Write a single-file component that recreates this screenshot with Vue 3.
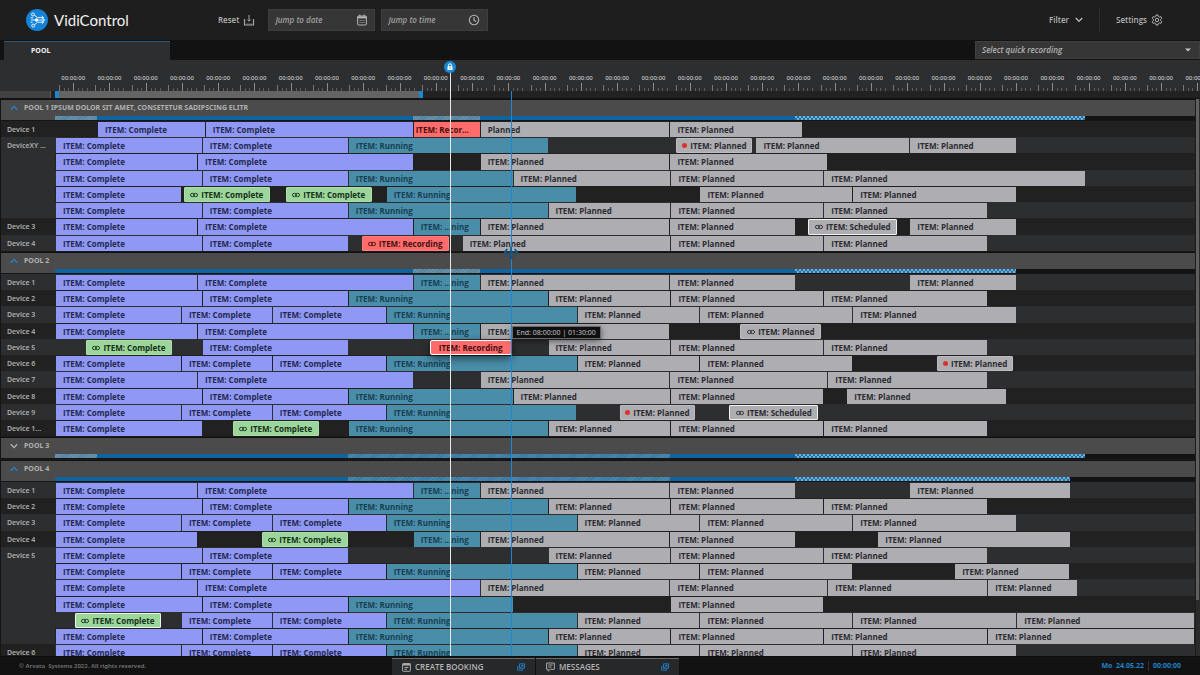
<script setup>
const ORIGIN = 55
const SPAN = 1141
const HOURS = 32

const at = (x) => ((x - ORIGIN) / SPAN) * 100 + '%'
const len = (a, b) => ((b - a) / SPAN) * 100 + '%'
const place = (a, b) => ({ left: at(a), width: len(a, b) })
const hourWidth = { flexBasis: (36.3 / SPAN) * 100 + '%' }

const names = {
  complete: 'ITEM: Complete',
  running: 'ITEM: Running',
  short: 'ITEM: ...ning',
  planned: 'ITEM: Planned',
  rest: 'Planned',
  cut: 'ITEM: Recor...',
  done: 'ITEM: Complete',
  doneMarked: 'ITEM: Complete',
  recording: 'ITEM: Recording',
  dragged: 'ITEM: Recording',
  armed: 'ITEM: Planned',
  linked: 'ITEM: Planned',
  scheduled: 'ITEM: Scheduled'
}
const withLink = ['done', 'doneMarked', 'recording', 'linked', 'scheduled']

const item = (kind, from, to) => ({ kind, from, to })
const chain = (kind, ...stops) => stops.slice(1).map((to, i) => item(kind, stops[i], to))
const C = (...s) => chain('complete', ...s)
const R = (...s) => chain('running', ...s)
const P = (...s) => chain('planned', ...s)

const rowA = (end) => [...C(55, 197, 413), item('short', 413, 480), ...P(480, 670, 796), ...P(910, end)]
const rowB = () => [...C(55, 202, 348), ...R(348, 548), ...P(548, 671, 824, 988)]
const rowC = (...tail) => [...C(55, 181, 272, 386), ...R(386, 577), ...P(577, 700, 853, ...tail)]

const pools = [
  {
    name: 'POOL 1 IPSUM DOLOR SIT AMET, CONSETETUR SADIPSCING ELITR',
    open: true,
    start: 0,
    load: [['hatch', 55, 97], ['full', 97, 413], ['hatch', 413, 480], ['full', 480, 796], ['dots', 796, 1086]],
    devices: [
      { name: 'Device 1', rows: [[...C(97, 205, 413), item('cut', 413, 480), item('rest', 480, 670), ...P(670, 803)]] },
      {
        name: 'DeviceXY long',
        text: 'DeviceXY ...',
        rows: [
          [...C(55, 202, 348), ...R(348, 548), item('armed', 676, 753), ...P(756, 910, 1017)],
          [...C(55, 197, 413), ...P(480, 670, 828)],
          [...C(55, 202, 348), ...R(348, 513), ...P(513, 671, 824, 1086)],
          [...C(55, 181), item('done', 183, 270), item('done', 285, 372), ...R(386, 576), ...P(700, 853, 1017)],
          rowB()
        ]
      },
      { name: 'Device 3', rows: [[...C(55, 197, 413), item('short', 413, 480), ...P(480, 670, 796), item('scheduled', 808, 898), ...P(910, 1017)]] },
      { name: 'Device 4', rows: [[...C(55, 202, 348), item('recording', 361, 449), ...P(462, 671, 824, 988)]] }
    ]
  },
  {
    name: 'POOL 2',
    open: true,
    start: 1,
    load: [['full', 55, 413], ['hatch', 413, 480], ['full', 480, 796], ['dots', 796, 1017]],
    devices: [
      { name: 'Device 1', rows: [rowA(1017)] },
      { name: 'Device 2', rows: [rowB()] },
      { name: 'Device 3', rows: [rowC(1017)] },
      { name: 'Device 4', rows: [[...C(55, 197, 413), item('short', 413, 480), ...P(480, 670), item('linked', 740, 822)]] },
      { name: 'Device 5', rows: [[item('done', 85, 172), ...C(202, 348), item('dragged', 429, 512), ...P(548, 671, 824, 988)]] },
      { name: 'Device 6', rows: [[...rowC(), item('armed', 937, 1014)]] },
      { name: 'Device 7', rows: [[...C(55, 197, 413), ...P(480, 670, 828, 988)]] },
      { name: 'Device 8', rows: [[...C(55, 202, 348), ...R(348, 513), ...P(513, 671, 824), ...P(847, 1007)]] },
      { name: 'Device 9', rows: [[...C(55, 181, 272, 386), ...R(386, 576), item('armed', 619, 696), item('scheduled', 729, 819)]] },
      { name: 'Device 10', text: 'Device 1...', rows: [[...C(55, 202), item('done', 232, 319), ...R(348, 548), ...P(548, 671, 824, 988)]] }
    ]
  },
  {
    name: 'POOL 3',
    open: false,
    start: 1,
    load: [['hatch', 55, 97], ['full', 97, 348], ['soft', 348, 671], ['full', 671, 796], ['dots', 796, 1086]],
    devices: []
  },
  {
    name: 'POOL 4',
    open: true,
    start: 1,
    load: [['full', 55, 348], ['soft', 348, 671], ['full', 671, 796], ['dots', 796, 1071]],
    devices: [
      { name: 'Device 1', rows: [rowA(1071)] },
      { name: 'Device 2', rows: [rowB()] },
      { name: 'Device 3', rows: [rowC(1017)] },
      { name: 'Device 4', rows: [[...C(55, 197), item('done', 261, 348), item('short', 413, 480), ...P(480, 670, 796), ...P(878, 1071)]] },
      {
        name: 'Device 5',
        rows: [
          [...C(55, 202, 348), ...P(548, 671, 824, 988)],
          [...rowC(), ...P(955, 1070)],
          [...C(55, 197, 480), ...P(480, 670, 828, 988, 1078)],
          [...C(55, 202, 348), ...R(348, 513), ...P(671, 824)],
          [item('doneMarked', 74, 161), ...C(181, 272, 386), ...R(386, 577), ...P(577, 700, 853, 1017, 1195)],
          [...C(55, 202, 348), ...R(348, 548), ...P(548, 671, 824, 988, 1195)]
        ]
      },
      { name: 'Device 6', rows: [rowC(1017)] }
    ]
  }
]

for (const pool of pools) {
  let n = 0
  pool.devices = pool.devices.map((device, i) => ({
    ...device,
    light: (i + pool.start) % 2 === 1,
    rows: device.rows.map((items) => {
      n += 1
      return { items, tall: n % 4 === 3, light: (n - 1 + pool.start) % 2 === 1 }
    })
  }))
}
</script>

<template>
  <div class="app">
    <header class="top">
      <div class="brand">
        <svg class="logo" viewBox="0 0 22 22" aria-hidden="true">
          <circle cx="11" cy="11" r="11" fill="#1283d8" />
          <g fill="none" stroke="#fff" stroke-width="0.9">
            <circle cx="7" cy="5.500" r="1.500" />
            <circle cx="7.200" cy="16.600" r="1.500" />
            <path d="M8.400 6.200 11.600 8.600H17.500M8.600 15.700l3-2.500H17.500M5 11h4M4.500 8.800h2.500M4.500 13.200h2M12 11h6.500M15.800 7 17.500 8.600l-1.700 1.600M17 9.700 18.700 11 17 12.500M15.800 11.800l1.700 1.400-1.700 1.600" />
          </g>
          <circle cx="10.500" cy="11" r="1.700" fill="#fff" />
        </svg>
        <span class="name">VidiControl</span>
      </div>
      <button class="plain" type="button">
        Reset
        <svg width="12" height="12" viewBox="0 0 12 12" aria-hidden="true" fill="none" stroke="#a8a8a8">
          <path d="M1.500 5v6h9V5" stroke-width="1.200" />
          <path d="M6 1v6M4.300 5.600 6 7.300l1.700-1.700M4 9.500v1M6 9.500v1M8 9.500v1" />
        </svg>
      </button>
      <div class="field">
        <input type="text" placeholder="Jump to date" aria-label="Jump to date" />
        <svg width="10" height="12" viewBox="0 0 10 12" aria-hidden="true" fill="none" stroke="#b4b4b4">
          <rect x="0.600" y="2" width="8.800" height="9" rx="0.800" />
          <path d="M0.600 3.400h8.800" stroke-width="2" />
          <path d="M2.800 0.500v2M7.200 0.500v2" />
          <path d="M2.500 6.500h5M2.500 8.500h5" stroke-dasharray="1.200 0.700" stroke="#8c8c8c" />
        </svg>
      </div>
      <div class="field">
        <input type="text" placeholder="Jump to time" aria-label="Jump to time" />
        <svg width="12" height="12" viewBox="0 0 12 12" aria-hidden="true" fill="none" stroke="#b4b4b4" stroke-width="1.100">
          <circle cx="6" cy="6" r="4.700" />
          <path d="M6 3v3.200l2.200 1.200" />
        </svg>
      </div>
      <div class="tools">
        <button class="plain filter" type="button">
          Filter
          <svg width="8" height="6" viewBox="0 0 8 6" aria-hidden="true" fill="none" stroke="#c0c0c0" stroke-width="1.300"><path d="M0.800 1 4 4.400 7.200 1" /></svg>
        </button>
        <button class="plain settings" type="button">
          Settings
          <svg width="12" height="12" viewBox="0 0 12 12" aria-hidden="true" fill="none" stroke="#b4b4b4">
            <path d="M5 1h2l.3 1.500 1 .6 1.500-.5 1 1.700L9.600 5.400v1.200l1.200 1.100-1 1.700-1.500-.5-1 .6L7 11H5l-.3-1.500-1-.6-1.500.5-1-1.700L2.400 6.600V5.400L1.200 4.300l1-1.700 1.500.5 1-.6z" />
            <circle cx="6" cy="6" r="1.700" />
          </svg>
        </button>
      </div>
    </header>

    <nav class="tabs">
      <button class="tab" type="button">POOL</button>
      <div class="quick">
        <select aria-label="Select quick recording">
          <option>Select quick recording</option>
        </select>
        <svg width="6" height="4" viewBox="0 0 6 4" aria-hidden="true"><path d="M0 0.400h6L3 3.600z" fill="#c4c4c4" /></svg>
      </div>
    </nav>

    <main class="board">
      <div class="ruler">
        <div v-for="h in HOURS" :key="h" class="hour" :style="hourWidth">
          <span>00:00:00</span>
          <svg width="36" height="8" viewBox="0 0 36 8" aria-hidden="true" shape-rendering="crispEdges">
            <path d="M18.500 0v8" stroke="#8a8a8a" />
            <path d="M4.500 2v6" stroke="#777" />
            <path d="M9.500 5v3M13.500 5v3M23.500 5v3M27.500 5v3M32.500 5v3" stroke="#5c5c5c" />
          </svg>
        </div>
      </div>

      <div class="range">
        <div class="range-side"></div>
        <div class="range-track">
          <div class="range-window" :style="{ width: len(55, 423) }"></div>
        </div>
      </div>

      <div class="pools">
        <div class="content">
          <section v-for="pool in pools" :key="pool.name" class="pool">
            <button class="pool-head" type="button" :aria-expanded="pool.open">
              <svg width="8" height="6" viewBox="0 0 8 6" aria-hidden="true" fill="none" stroke-width="1.300">
                <path v-if="pool.open" d="M0.800 4.800 4 1.400 7.200 4.800" stroke="#1d86cc" />
                <path v-else d="M0.800 1.200 4 4.600 7.200 1.200" stroke="#b4b4b4" />
              </svg>
              {{ pool.name }}
            </button>
            <div class="load">
              <div class="load-track">
                <i v-for="seg in pool.load" :key="seg[1]" :class="seg[0]" :style="place(seg[1], seg[2])"></i>
              </div>
            </div>
            <div class="devices">
              <div v-for="device in pool.devices" :key="device.name" class="device">
                <div class="label" :class="{ light: device.light }">{{ device.text || device.name }}</div>
                <div class="rows">
                  <div v-for="(row, r) in device.rows" :key="r" class="row" :class="{ tall: row.tall, light: row.light }">
                    <div v-for="it in row.items" :key="it.from" class="slot" :style="place(it.from, it.to)">
                      <div class="item" :class="it.kind">
                        <svg v-if="withLink.includes(it.kind)" width="8" height="6" viewBox="0 0 8 6" aria-hidden="true" fill="none" stroke="currentColor" stroke-width="0.900">
                          <rect x="0.500" y="1.300" width="3.800" height="3.400" rx="1.700" />
                          <rect x="3.700" y="1.300" width="3.800" height="3.400" rx="1.700" />
                        </svg>
                        <b v-if="it.kind === 'armed'" class="rec"></b>
                        <span>{{ names[it.kind] }}</span>
                      </div>
                      <div v-if="it.kind === 'dragged'" class="tip">End: 08:00:00 | 01:30:00</div>
                    </div>
                  </div>
                </div>
              </div>
            </div>
          </section>
        </div>
        <div class="scroll"><div class="thumb"></div></div>
      </div>

      <div class="overlay">
        <div class="snap" :style="{ left: at(511) }">
          <svg width="16" height="14" viewBox="0 0 16 14" aria-hidden="true" fill="none" stroke="#14527f" stroke-width="1.600">
            <path d="M2 6h12M8 1v11M4.500 3 1.500 6l3 3M11.500 3l3 3-3 3M6 10.500l2 2 2-2" />
          </svg>
        </div>
        <div class="now" :style="{ left: at(450) }">
          <svg width="12" height="12" viewBox="0 0 12 12" aria-hidden="true">
            <circle cx="6" cy="6" r="6" fill="#1788d4" />
            <rect x="3.500" y="5.300" width="5" height="3.700" rx="0.400" fill="#fff" />
            <path d="M4.500 5.500V4.300a1.500 1.500 0 0 1 3 0v1.200" fill="none" stroke="#fff" />
            <path d="M6 6.300v1.500" stroke="#1788d4" />
          </svg>
        </div>
      </div>
    </main>

    <footer class="foot">
      <small>© Arvato &nbsp;Systems 2022. All rights reserved.</small>
      <div class="docks">
        <button type="button">
          <svg width="9" height="10" viewBox="0 0 9 10" aria-hidden="true" fill="none" stroke="#a8a8a8">
            <rect x="0.600" y="1.500" width="7.800" height="7.800" rx="0.600" />
            <path d="M0.600 2.700h7.800" stroke-width="1.800" />
            <path d="M2.500 5.500h4M2.500 7.300h2.500" />
          </svg>
          <span>CREATE BOOKING</span>
          <svg class="pop" width="8" height="8" viewBox="0 0 8 8" aria-hidden="true" fill="none" stroke="#1d79bc">
            <path d="M2.500 0.800h5v4.500h-5zM0.700 3v4.300h4.800V5.500M2 6l4-3.800M4 2.200h2v2" />
          </svg>
        </button>
        <button type="button">
          <svg width="9" height="10" viewBox="0 0 9 10" aria-hidden="true" fill="none" stroke="#a8a8a8">
            <path d="M0.600 1h7.800v6.300H4.200L2.200 9.200V7.300H0.600z" />
            <path d="M2.300 3h4.400M2.300 5h3.200" />
          </svg>
          <span>MESSAGES</span>
          <svg class="pop" width="8" height="8" viewBox="0 0 8 8" aria-hidden="true" fill="none" stroke="#1d79bc">
            <path d="M2.500 0.800h5v4.500h-5zM0.700 3v4.300h4.800V5.500M2 6l4-3.800M4 2.200h2v2" />
          </svg>
        </button>
      </div>
      <div class="clock">
        <span class="date">Mo&nbsp; 24.05.22</span>
        <time>00:00:00</time>
      </div>
    </footer>
  </div>
</template>

<style>
body {
  background: #121212;
}
</style>

<style scoped>
* {
  box-sizing: border-box;
}
.app {
  display: flex;
  flex-direction: column;
  height: 100vh;
  overflow: hidden;
  font-family: "Open Sans", "Noto Sans", sans-serif;
  font-size: 8px;
  line-height: 12px;
  color: #b4b4b4;
  background: #121212;
}
button,
input,
select {
  font: inherit;
  color: inherit;
  background: none;
  border: 0;
  border-radius: 0;
  margin: 0;
  padding: 0;
  outline: 0;
}
svg {
  display: block;
  flex: none;
}

/* header */
.top {
  flex: none;
  display: flex;
  align-items: center;
  height: 40px;
  padding: 0 37px 0 26px;
  background: #1e1e1e;
}
.brand {
  display: flex;
  align-items: center;
  gap: 6px;
  width: 192px;
}
.logo {
  width: 22px;
  height: 22px;
}
.name {
  font-family: Lato, "Open Sans", sans-serif;
  font-size: 15px;
  line-height: 22px;
  color: #f2f2f2;
}
.plain {
  display: flex;
  align-items: center;
  gap: 4px;
  font-weight: 600;
}
.field {
  display: flex;
  align-items: center;
  width: 107px;
  height: 22px;
  margin-left: 6px;
  padding: 0 7px 0 6px;
  background: #363636;
  border: 1px solid #3e3e3e;
}
.plain + .field {
  margin-left: 13px;
}
.field input {
  flex: 1;
  min-width: 0;
  font-style: italic;
  font-weight: 600;
}
.field input::placeholder {
  color: #a0a0a0;
  opacity: 1;
}
.tools {
  display: flex;
  margin-left: auto;
}
.filter {
  gap: 6px;
  padding-right: 16px;
}
.settings {
  height: 22px;
  padding-left: 16px;
  border-left: 1px solid #2e2e2e;
}

/* tabs */
.tabs {
  flex: none;
  display: flex;
  justify-content: space-between;
  height: 20px;
  padding: 1px 0 0 4px;
  background: #121212;
}
.tab {
  width: 166px;
  padding-left: 27px;
  text-align: left;
  font-family: "Noto Sans", sans-serif;
  font-size: 7px;
  font-weight: 700;
  color: #f0f0f0;
  background: #2d2e30;
  border-top: 1px solid #255b80;
}
.quick {
  display: flex;
  align-items: center;
  width: 225px;
  height: 18px;
  padding: 0 8px 0 6px;
  background: #363636;
  border: 1px solid #404040;
}
.quick select {
  flex: 1;
  appearance: none;
  font-style: italic;
  font-weight: 600;
}

/* time ruler */
.board {
  position: relative;
  flex: 1;
  min-height: 0;
  display: flex;
  flex-direction: column;
  background: #2d2e30;
}
.ruler {
  flex: none;
  display: flex;
  align-items: flex-end;
  height: 31px;
  padding: 0 5px 0 55px;
}
.hour {
  flex-grow: 0;
  flex-shrink: 0;
  display: flex;
  flex-direction: column;
  align-items: center;
  font-family: "Noto Sans", sans-serif;
  font-size: 6px;
  font-weight: 500;
  line-height: 10px;
  color: #c0c0c0;
}
.range {
  flex: none;
  display: flex;
  height: 8px;
  background: #222;
  border-bottom: 1px solid #121212;
}
.range-side {
  width: 51px;
  margin-right: 4px;
  background: #414141;
  border-right: 1px solid #5a5a5a;
}
.range-track {
  flex: 1;
  margin-right: 5px;
}
.range-window {
  height: 7px;
  background: #646464;
  border: solid #1788d4;
  border-width: 0 4px;
}

/* pools */
.pools {
  flex: 1;
  min-height: 0;
  display: flex;
  overflow: hidden;
}
.content {
  flex: 1;
  min-width: 0;
  border-left: 1px solid #151515;
}
.pool-head {
  display: flex;
  align-items: center;
  gap: 6px;
  width: 100%;
  height: 17px;
  padding-left: 9px;
  text-align: left;
  font-family: "Noto Sans", sans-serif;
  font-size: 7px;
  font-weight: 700;
  color: #b0b0b0;
  background: #4b4b4b;
  border-top: 1px solid #121212;
}
.load {
  height: 5px;
  padding-left: 54px;
  background: #4b4b4b;
  border-bottom: 1px solid #151515;
}
.load-track {
  position: relative;
  height: 4px;
  background: #131313;
}
.load-track i {
  position: absolute;
  top: 0;
  bottom: 0;
}
.full {
  background: #0f64a0;
}
.hatch {
  background: repeating-linear-gradient(135deg, #6f92a8 0 1px, #4d83a5 1px 2px);
}
.soft {
  background: repeating-linear-gradient(135deg, #4f88ad 0 1px, #3478a6 1px 2px);
}
.dots {
  background:
    radial-gradient(circle at 1px 1px, #72b0d6 0 1px, transparent 1px) 0 0 / 4px 4px,
    radial-gradient(circle at 3px 3px, #72b0d6 0 1px, transparent 1px) 0 0 / 4px 4px,
    #2272a8;
}
.devices {
  padding-bottom: 1px;
  background: #191919;
}
.device {
  display: flex;
}
.label {
  width: 54px;
  padding: 3px 6px 0;
  font-family: "Noto Sans", sans-serif;
  font-size: 7px;
  font-weight: 600;
  line-height: 11px;
  white-space: nowrap;
  color: #adadad;
  background: #212121;
}
.rows {
  flex: 1;
}
.row {
  position: relative;
  height: 16px;
  background: #212121;
}
.row.tall {
  height: 17px;
}
.row.light,
.label.light {
  background: #2d2e30;
}
.slot {
  position: absolute;
  top: 0;
  bottom: 0;
  padding: 1px 0 0 1px;
}
.item {
  display: flex;
  align-items: center;
  gap: 3px;
  height: 100%;
  padding-left: 7px;
  overflow: hidden;
  font-weight: 700;
  white-space: nowrap;
}
.complete {
  color: #25284f;
  background: #8f98f4;
}
.running,
.short {
  color: #173f52;
  background: #498da9;
}
.planned,
.rest,
.armed,
.linked,
.scheduled {
  color: #2b2b30;
  background: #aeadb2;
}
.done,
.doneMarked,
.recording,
.dragged,
.linked,
.scheduled,
.armed {
  justify-content: center;
  padding: 0;
  border: 1px solid #bdbcc2;
  border-radius: 1px;
}
.done,
.doneMarked {
  color: #14301a;
  background: #9dd69b;
  border-color: #abe0a9;
}
.doneMarked,
.scheduled {
  border-color: #f0f0f0;
}
.cut,
.recording,
.dragged {
  color: #45100f;
  background: #ff6c6b;
  border-color: #ff7d7c;
}
.cut {
  padding-left: 2px;
}
.slot:has(.dragged) {
  z-index: 1;
}
.dragged {
  border: 1px solid #fff;
  border-radius: 2px;
  box-shadow: 0 3px 8px rgba(0, 0, 0, 0.6);
}
.rec {
  width: 5px;
  height: 5px;
  border-radius: 50%;
  background: #e0302c;
}
.tip {
  position: absolute;
  left: 100%;
  bottom: 100%;
  width: max-content;
  padding: 0 4px;
  font-family: "Noto Sans", sans-serif;
  font-size: 7px;
  line-height: 11px;
  color: #c0c0c0;
  background: #0f0f0f;
  border: 1px solid #6a6a6a;
  box-shadow: 0 2px 6px rgba(0, 0, 0, 0.5);
}
.scroll {
  width: 5px;
  background: #2b2b2b;
  border-left: 1px solid #1c1c1c;
}
.thumb {
  width: 3px;
  height: 90%;
  background: #606060;
}

/* time markers */
.overlay {
  position: absolute;
  inset: 0 5px 0 55px;
  z-index: 2;
  pointer-events: none;
}
.now,
.snap {
  position: absolute;
  bottom: 0;
  width: 1px;
}
.now {
  top: 1px;
  background: #e8e8e8;
}
.now svg {
  margin-left: -6px;
}
.snap {
  top: 31px;
  background: #1c88d4;
}
.snap svg {
  margin: 155px 0 0 -8px;
}

/* footer */
.foot {
  flex: none;
  display: grid;
  grid-template-columns: 392fr 287fr 521fr;
  align-items: center;
  height: 19px;
  background: #121212;
  border-top: 1px solid #0c0c0c;
}
.foot small {
  padding-left: 19px;
  font-family: "Noto Sans", sans-serif;
  font-size: 6px;
  font-weight: 600;
  color: #767676;
}
.docks {
  display: flex;
  gap: 1px;
  height: 17px;
}
.docks button {
  flex: 1;
  display: flex;
  align-items: center;
  gap: 4px;
  padding: 0 10px;
  font-weight: 600;
  background: #27282a;
  border-top: 1px solid #6a6a6a;
}
.docks .pop {
  margin-left: auto;
}
.clock {
  display: flex;
  justify-content: flex-end;
  padding-right: 19px;
  font-family: "Noto Sans", sans-serif;
  font-size: 7px;
  font-weight: 700;
  line-height: 10px;
  color: #1f82c8;
}
.date {
  padding-right: 4px;
  margin-right: 4px;
  border-right: 1px solid #333;
}
</style>
